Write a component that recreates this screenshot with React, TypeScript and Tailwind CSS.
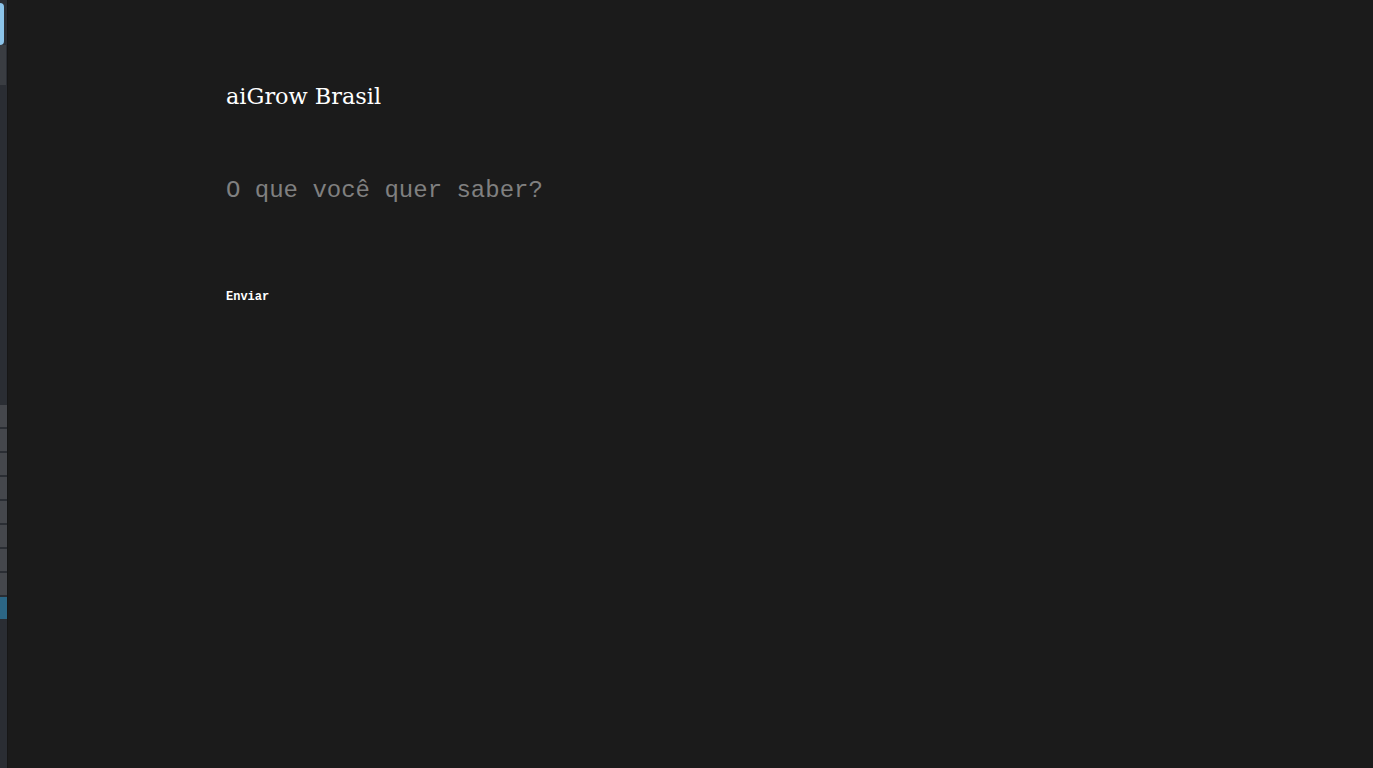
const App = () => {
  const tabs = [0, 1, 2, 3, 4, 5, 6, 7];
  return (
    <div className="flex h-[768px] w-full bg-[#1b1b1b]">
      <div className="flex w-[7px] shrink-0 flex-col bg-[#2a2d33]">
        <div className="mt-[3px] h-[42px] w-[4px] rounded-r-sm bg-[#8cc4ea]" />
        <div className="h-[40px] w-[6px] bg-[#3a3d42]" />
        <div className="mt-[320px] flex flex-col gap-[2px]">
          {tabs.map((t) => (
            <div key={t} className="h-[22px] w-[7px] bg-[#45474c]" />
          ))}
          <div className="h-[22px] w-[7px] bg-[#2c6685]" />
        </div>
      </div>
      <div className="w-px bg-[#161616]" />
      <div className="flex flex-col pl-[218px] pt-[80px]">
        <h1 className="text-[22.4px] leading-[32px] text-white" style={{ fontFamily: '"DejaVu Serif", serif' }}>
          aiGrow Brasil
        </h1>
        <input
          placeholder="O que você quer saber?"
          className="mt-[63px] w-[600px] bg-transparent text-[24px] leading-[32px] text-white outline-none placeholder:text-[#808080]"
          style={{ fontFamily: '"Liberation Mono", monospace' }}
        />
        <button
          className="mt-[82px] self-start text-[12px] font-bold leading-[16px] text-white"
          style={{ fontFamily: '"Liberation Mono", monospace' }}
        >
          Enviar
        </button>
      </div>
    </div>
  );
};

export default App;
